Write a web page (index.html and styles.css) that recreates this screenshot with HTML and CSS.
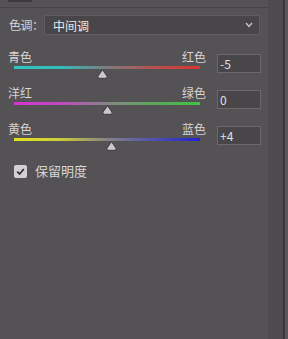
FILE: index.html
```html
<!DOCTYPE html>
<html>
<head>
    <title>Color Balance</title>
    <link rel="stylesheet" href="styles.css">
</head>
<body>
    <div class="panel">
        <div class="top-strip"><div class="tab"></div></div>

        <div class="tone-row">
            <div class="tone-label">色调：</div>
            <div class="dropdown">
                <span>中间调</span>
                <svg class="chevron" width="8" height="6" viewBox="0 0 8 6">
                    <polyline points="1,1 4,4.5 7,1" fill="none" stroke="#c8c6c8" stroke-width="1.3"/>
                </svg>
            </div>
        </div>

        <div class="sliders">
            <div class="slider-row">
                <div class="slider">
                    <div class="labels"><span>青色</span><span>红色</span></div>
                    <div class="track track-cr"></div>
                    <svg class="thumb" style="left: 89px" width="11" height="10" viewBox="0 0 11 10">
                        <path d="M5.5 0.8 L10 7.2 Q10.4 9.3 8.4 9.3 L2.6 9.3 Q0.6 9.3 1 7.2 Z" fill="#c9c7c9" stroke="#2f2d2f" stroke-width="0.8"/>
                    </svg>
                </div>
                <div class="value">-5</div>
            </div>

            <div class="slider-row">
                <div class="slider">
                    <div class="labels"><span>洋红</span><span>绿色</span></div>
                    <div class="track track-mg"></div>
                    <svg class="thumb" style="left: 94px" width="11" height="10" viewBox="0 0 11 10">
                        <path d="M5.5 0.8 L10 7.2 Q10.4 9.3 8.4 9.3 L2.6 9.3 Q0.6 9.3 1 7.2 Z" fill="#c9c7c9" stroke="#2f2d2f" stroke-width="0.8"/>
                    </svg>
                </div>
                <div class="value">0</div>
            </div>

            <div class="slider-row">
                <div class="slider">
                    <div class="labels"><span>黄色</span><span>蓝色</span></div>
                    <div class="track track-yb"></div>
                    <svg class="thumb" style="left: 98px" width="11" height="10" viewBox="0 0 11 10">
                        <path d="M5.5 0.8 L10 7.2 Q10.4 9.3 8.4 9.3 L2.6 9.3 Q0.6 9.3 1 7.2 Z" fill="#c9c7c9" stroke="#2f2d2f" stroke-width="0.8"/>
                    </svg>
                </div>
                <div class="value">+4</div>
            </div>
        </div>

        <div class="keep-row">
            <svg class="checkbox" width="13" height="13" viewBox="0 0 13 13">
                <rect x="0" y="0" width="13" height="13" rx="2" fill="#d2d0d2"/>
                <polyline points="3.2,6.6 5.6,9 9.8,4" fill="none" stroke="#333133" stroke-width="1.8"/>
            </svg>
            <span>保留明度</span>
        </div>
    </div>
    <div class="gutter"></div>
    <div class="divider"></div>
    <div class="edge"></div>
</body>
</html>
```

FILE: styles.css
```css
body {
    margin: 0;
    padding: 0;
    height: 339px;
    display: flex;
    background: #545254;
    font-family: "Noto Sans CJK SC", "Noto Sans", sans-serif;
    font-size: 12px;
    color: #d6d4d6;
    overflow: hidden;
}
.panel {
    flex: 0 0 268px;
}
.gutter {
    width: 15px;
    background: #4d4b4d;
}
.divider {
    width: 2px;
    background: #383638;
}
.edge {
    flex: 1;
    background: #5a585a;
}
.top-strip {
    height: 7px;
    border-bottom: 1px solid #464446;
}
.tab {
    margin-left: 8px;
    width: 24px;
    height: 2px;
    background: #3b393b;
}
.tone-row {
    display: flex;
    align-items: center;
    margin-top: 7px;
}
.tone-label {
    width: 35px;
    padding-left: 9px;
    line-height: 14px;
    white-space: nowrap;
    letter-spacing: -0.5px;
}
.dropdown {
    width: 216px;
    height: 20px;
    box-sizing: border-box;
    border: 1px solid #5f5d5f;
    background: #484648;
    display: flex;
    align-items: center;
    justify-content: space-between;
    padding: 0 6px 0 8px;
    color: #ecebec;
}
.sliders {
    margin-top: 15px;
}
.slider-row {
    display: flex;
    height: 36px;
}
.slider {
    position: relative;
    margin-left: 8px;
    width: 198px;
}
.labels {
    display: flex;
    justify-content: space-between;
    height: 14px;
    line-height: 14px;
}
.track {
    margin: 2px 6px 0 6px;
    height: 3px;
}
.track-cr {
    background: linear-gradient(to right, #2fc6c6 0%, #34baba 25%, #7d7b7d 50%, #b85050 75%, #d83434 100%);
}
.track-mg {
    background: linear-gradient(to right, #d433d4 0%, #c04ac0 25%, #878587 50%, #5aa85a 75%, #3fc43f 100%);
}
.track-yb {
    background: linear-gradient(to right, #e2e21e 0%, #cccc3a 25%, #858385 50%, #5050b0 75%, #2222d2 100%);
}
.thumb {
    position: absolute;
    top: 19px;
}
.value {
    margin-left: 11px;
    margin-top: 4px;
    width: 44px;
    height: 19px;
    box-sizing: border-box;
    border: 1px solid #6a686a;
    background: #484648;
    padding-left: 2px;
    line-height: 17px;
    color: #e2e0e2;
}
.keep-row {
    display: flex;
    align-items: center;
    gap: 8px;
    margin-top: 6px;
    margin-left: 14px;
    font-size: 13px;
    line-height: 14px;
}
```
